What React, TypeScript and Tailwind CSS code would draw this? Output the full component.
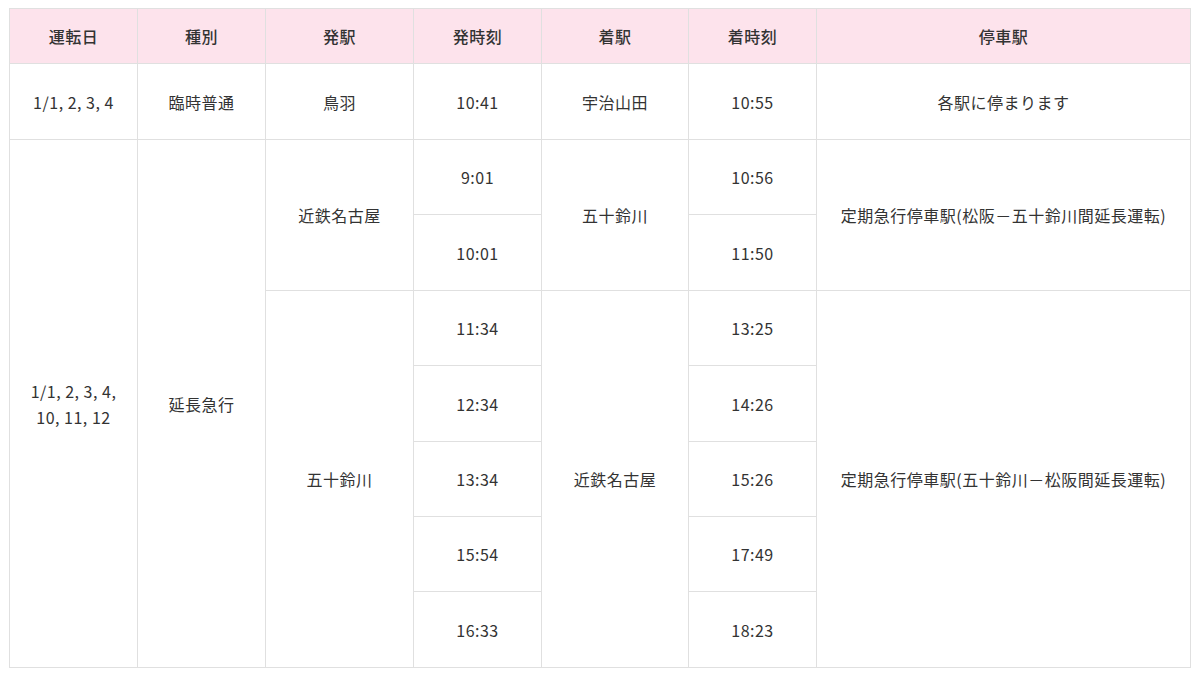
const widths = ['w-[128px]', 'w-[128px]', 'w-[148px]', 'w-[128px]', 'w-[147px]', 'w-[128px]', 'w-[374px]'];
const headers = ['運転日', '種別', '発駅', '発時刻', '着駅', '着時刻', '停車駅'];

const td = 'border border-[#e0e0e0] text-center align-middle px-2';

export default function App() {
  return (
    <div
      className="bg-white p-[9px] pt-[8px] text-[16px] tracking-[0.5px] text-[#333]"
      style={{ fontFamily: '"Noto Sans CJK JP", "Noto Sans", sans-serif' }}
    >
      <table className="border-collapse table-fixed w-[1181px]">
        <colgroup>
          {widths.map((w, i) => (
            <col key={i} className={w} />
          ))}
        </colgroup>
        <thead>
          <tr className="h-[55px] bg-[#fde3ec]">
            {headers.map((h) => (
              <th key={h} className={`${td} font-medium`}>
                {h}
              </th>
            ))}
          </tr>
        </thead>
        <tbody>
          <tr className="h-[76px]">
            <td className={td}>1/1, 2, 3, 4</td>
            <td className={td}>臨時普通</td>
            <td className={td}>鳥羽</td>
            <td className={td}>10:41</td>
            <td className={td}>宇治山田</td>
            <td className={td}>10:55</td>
            <td className={td}>各駅に停まります</td>
          </tr>
          <tr className="h-[75px]">
            <td className={`${td} leading-[26px]`} rowSpan={7}>
              1/1, 2, 3, 4,
              <br />
              10, 11, 12
            </td>
            <td className={td} rowSpan={7}>延長急行</td>
            <td className={td} rowSpan={2}>近鉄名古屋</td>
            <td className={td}>9:01</td>
            <td className={td} rowSpan={2}>五十鈴川</td>
            <td className={td}>10:56</td>
            <td className={td} rowSpan={2}>定期急行停車駅(松阪－五十鈴川間延長運転)</td>
          </tr>
          <tr className="h-[76px]">
            <td className={td}>10:01</td>
            <td className={td}>11:50</td>
          </tr>
          <tr className="h-[75px]">
            <td className={td} rowSpan={5}>五十鈴川</td>
            <td className={td}>11:34</td>
            <td className={td} rowSpan={5}>近鉄名古屋</td>
            <td className={td}>13:25</td>
            <td className={td} rowSpan={5}>定期急行停車駅(五十鈴川－松阪間延長運転)</td>
          </tr>
          <tr className="h-[76px]">
            <td className={td}>12:34</td>
            <td className={td}>14:26</td>
          </tr>
          <tr className="h-[75px]">
            <td className={td}>13:34</td>
            <td className={td}>15:26</td>
          </tr>
          <tr className="h-[75px]">
            <td className={td}>15:54</td>
            <td className={td}>17:49</td>
          </tr>
          <tr className="h-[76px]">
            <td className={td}>16:33</td>
            <td className={td}>18:23</td>
          </tr>
        </tbody>
      </table>
    </div>
  );
}
